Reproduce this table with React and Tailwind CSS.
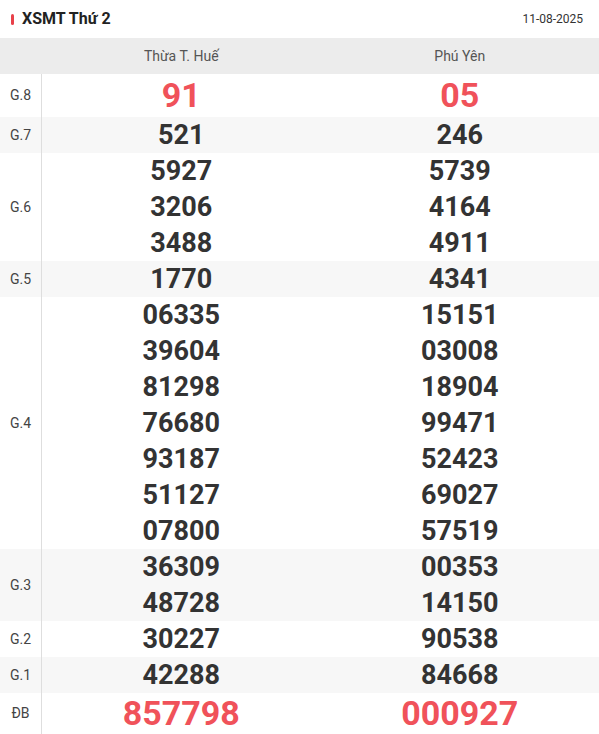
import React from 'react';

const ketQua = [
  { giai: 'G.8', a: ['91'], b: ['05'], dac: true, cao: 'h-[43px]' },
  { giai: 'G.7', a: ['521'], b: ['246'], xam: true },
  { giai: 'G.6', a: ['5927', '3206', '3488'], b: ['5739', '4164', '4911'] },
  { giai: 'G.5', a: ['1770'], b: ['4341'], xam: true },
  {
    giai: 'G.4',
    a: ['06335', '39604', '81298', '76680', '93187', '51127', '07800'],
    b: ['15151', '03008', '18904', '99471', '52423', '69027', '57519'],
  },
  { giai: 'G.3', a: ['36309', '48728'], b: ['00353', '14150'], xam: true },
  { giai: 'G.2', a: ['30227'], b: ['90538'] },
  { giai: 'G.1', a: ['42288'], b: ['84668'], xam: true },
  { giai: 'ĐB', a: ['857798'], b: ['000927'], dac: true, cao: 'h-[41px]' },
];

function CotSo({ so, dac, cao }) {
  return (
    <div className="flex flex-col items-center">
      {so.map((s) => (
        <div
          key={s}
          className={`flex items-center justify-center font-bold ${
            dac ? `${cao} text-[34px] text-[#f0525a]` : 'h-9 text-[27px] text-[#333]'
          }`}
        >
          {s}
        </div>
      ))}
    </div>
  );
}

export default function App() {
  return (
    <div className="w-[599px] bg-white font-['Roboto',_sans-serif]">
      <div className="flex h-[38px] items-center justify-between pl-[11px] pr-[16px]">
        <div className="flex items-center gap-[8px]">
          <span className="h-[11px] w-[3px] rounded-sm bg-[#e8414a]" />
          <h1 className="text-[16px] font-bold text-[#222]">XSMT Thứ 2</h1>
        </div>
        <span className="text-[12px] text-[#333]">11-08-2025</span>
      </div>

      <div className="grid h-9 grid-cols-[42px_1fr_1fr] items-center bg-[#ececec] text-[14px] text-[#555]">
        <div />
        <div className="text-center">Thừa T. Huế</div>
        <div className="text-center">Phú Yên</div>
      </div>

      {ketQua.map((r) => (
        <div
          key={r.giai}
          className={`grid grid-cols-[42px_1fr_1fr] ${r.xam ? 'bg-[#f7f7f7]' : 'bg-white'}`}
        >
          <div className="flex items-center justify-center border-r border-[#dedede] text-[14px] text-[#444]">
            {r.giai}
          </div>
          <CotSo so={r.a} dac={r.dac} cao={r.cao} />
          <CotSo so={r.b} dac={r.dac} cao={r.cao} />
        </div>
      ))}
    </div>
  );
}
